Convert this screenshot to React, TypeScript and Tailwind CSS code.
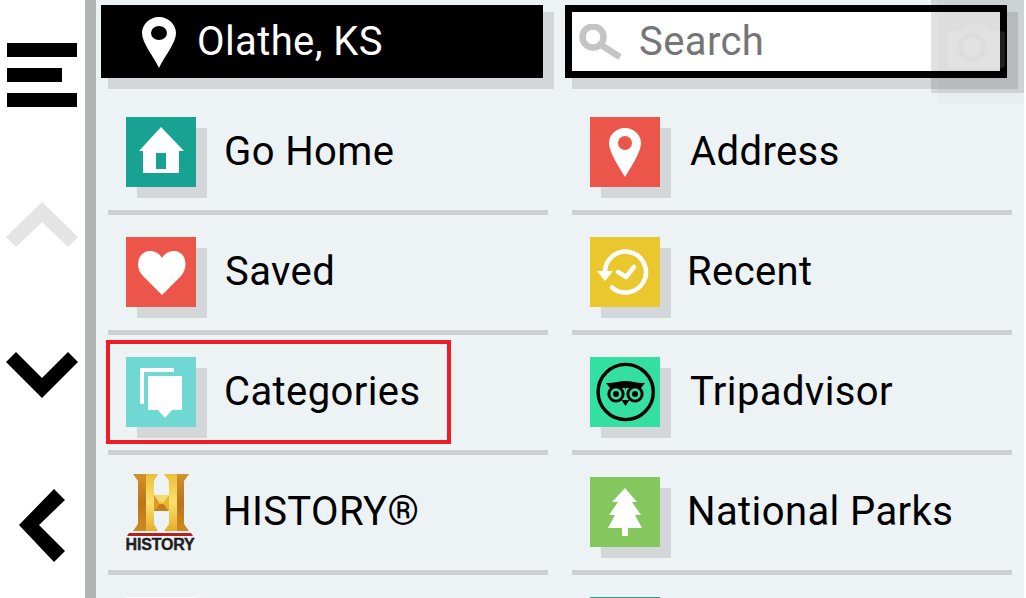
const shadowBox = "relative w-[70px] h-[70px] shrink-0 shadow-[11px_11px_0_0_#d3d7da]";

function Tile({ color, children }: { color: string; children: React.ReactNode }) {
  return (
    <div className={`${shadowBox} ${color}`}>
      <svg viewBox="0 0 70 70" className="w-[70px] h-[70px] block">{children}</svg>
    </div>
  );
}

const HomeIcon = () => (
  <Tile color="bg-[#18a291]">
    <path fillRule="evenodd" fill="#fff" d="M35 10 L58 34 L53 34 L53 56 L17 56 L17 34 L13 34 Z M30 36 V52 H40 V36 Z" />
  </Tile>
);
const PinIcon = () => (
  <Tile color="bg-[#ec5549]">
    <path fillRule="evenodd" fill="#fff" d="M35 11 C44 11 51 18 51 26 C51 35 41 50 35 60 C29 50 19 35 19 26 C19 18 26 11 35 11 Z M35 19 A7 7 0 1 0 35 33 A7 7 0 1 0 35 19 Z" />
  </Tile>
);
const HeartIcon = () => (
  <Tile color="bg-[#ec5549]">
    <path fill="#fff" d="M36 58 L17 39 C8 30 12 14 24 14 C29 14 33 16 36 21 C39 16 43 14 48 14 C60 14 63 30 55 39 Z" />
  </Tile>
);
const RecentIcon = () => (
  <Tile color="bg-[#eac72d]">
    <path fill="none" stroke="#fff" strokeWidth="4.5" strokeLinecap="round" d="M15 34 A20.5 20.5 0 1 1 22 50.5" />
    <path fill="#fff" d="M7 34 H23 L15 44 Z" />
    <path fill="none" stroke="#fff" strokeWidth="4.5" strokeLinecap="round" strokeLinejoin="round" d="M28 35 L36 40 L44 30" />
  </Tile>
);
const CategoriesIcon = () => (
  <Tile color="bg-[#6fd8d2]">
    <path fill="none" stroke="#fff" strokeWidth="4" d="M16 47 V13 H48" />
    <path fill="#fff" d="M22 19 H56 V53 H46 L39 61 L32 53 H22 Z" />
  </Tile>
);
const OwlIcon = () => (
  <Tile color="bg-[#34e0a1]">
    <circle cx="35.7" cy="35" r="27.6" fill="none" stroke="#000" strokeWidth="3.4" />
    <path fill="#000" d="M16 26 C24 26.5 29 24 35.5 24 C42 24 47 26.5 55 26 L51 31 H36 L35.5 33 L35 31 H20 Z" />
    <path fill="#000" d="M31.5 43 L35.5 49 L39.5 43 Z" />
    <circle cx="26" cy="37" r="8.6" fill="#000" />
    <circle cx="45" cy="37" r="8.6" fill="#000" />
    <circle cx="26" cy="37" r="5.7" fill="#34e0a1" />
    <circle cx="45" cy="37" r="5.7" fill="#34e0a1" />
    <circle cx="26" cy="37" r="3" fill="#000" />
    <circle cx="45" cy="37" r="3" fill="#000" />
  </Tile>
);
const TreeIcon = () => (
  <Tile color="bg-[#84c75c]">
    <path fill="#fff" d="M35 11 L47 25 H42 L51 38 H45 L52 51 H38 V59 H32 V51 H18 L25 38 H19 L28 25 H22 Z" />
  </Tile>
);
const HistoryIcon = () => (
  <div className="relative w-[70px] h-[70px] shrink-0">
    <svg viewBox="0 0 70 70" className="w-[70px] h-[70px] block overflow-visible">
      <defs>
        <linearGradient id="dark" x1="0" x2="0" y1="0" y2="1">
          <stop offset="0" stopColor="#d0922a" />
          <stop offset="0.5" stopColor="#bd731b" />
          <stop offset="1" stopColor="#cc8a20" />
        </linearGradient>
        <linearGradient id="light" x1="0" x2="0" y1="0" y2="1">
          <stop offset="0" stopColor="#edbe38" />
          <stop offset="0.5" stopColor="#f8e26b" />
          <stop offset="1" stopColor="#e6ad2c" />
        </linearGradient>
      </defs>
      <polygon fill="url(#dark)" points="7,-3 20,-3 20,54 7,54 12,47 12,4" />
      <polygon fill="url(#light)" points="20,-3 32,-3 28,4 28,47 32,54 20,54" />
      <polygon fill="url(#light)" points="38,-3 51,-3 51,54 38,54 43,47 43,4" />
      <polygon fill="url(#dark)" points="51,-3 63,-3 58,4 58,47 63,54 51,54" />
      <polygon fill="#f5d969" points="28,18 43,18 38,25 33,25" />
      <polygon fill="#e09b25" points="28,18 33,25 33,27 28,34" />
      <polygon fill="#c67f1d" points="28,34 33,27 38,27 43,34" />
      <polygon fill="#f0c03a" points="33,25 38,25 38,27 33,27" />
      <polygon fill="#e8b12f" points="43,18 38,25 38,27 43,34" />
      <polygon fill="#b21f24" points="3,56 65,56 67,59 1,59" />
    </svg>
    <span className="absolute left-[-2px] top-[60px] w-[72px] text-center font-['Liberation_Sans',sans-serif] font-bold text-[16px] leading-[16px] tracking-[-0.2px] text-[#1e1e24] [-webkit-text-stroke:0.4px_#1e1e24]">HISTORY</span>
  </div>
);

const labelClass = "text-[40px] leading-none text-black font-['Roboto',sans-serif] tracking-[0.4px]";

function Row({ icon, label, offset, boxed = false }: { icon: React.ReactNode; label: string; offset: string; boxed?: boolean }) {
  return (
    <div className="relative h-[120px] w-[440px] shrink-0">
      <div className="flex items-center h-[115px] pb-[1px] pl-[18px]">
        {icon}
        <span className={`${offset} ${labelClass}`}>{label}</span>
      </div>
      <div className="h-[5px] bg-[#cdd1d4]" />
      {boxed && <div className="absolute left-[-2px] top-[5px] w-[345px] h-[104px] border-4 border-[#ee1c25]" />}
    </div>
  );
}

export default function App() {
  return (
    <div className="w-[1026px] h-[598px] bg-white overflow-hidden flex">
      <aside className="w-[85px] shrink-0 flex flex-col items-center">
        <svg width="85" height="598" viewBox="0 0 85 598" className="block">
          <rect x="7" y="43" width="70" height="14" />
          <rect x="7" y="68" width="55" height="14" />
          <rect x="7" y="93" width="70" height="14" />
          <path fill="#e4e4e4" d="M42 202 L78 237 L68 247 L42 222 L16 247 L6 237 Z" />
          <path d="M42 398 L78 362 L68 352 L42 378 L16 352 L6 362 Z" />
          <path d="M19 525 L54 489 L65 500 L39 525 L65 551 L54 562 Z" />
        </svg>
      </aside>
      <div className="w-[11px] shrink-0 bg-[#afb3b6]" />
      <main className="relative w-[928px] shrink-0 bg-[#edf2f5] overflow-hidden">
        <div className="flex gap-[22px] pl-[5px] pt-[5px]">
          <div className="w-[442px] h-[73px] bg-black shadow-[9px_9px_0_2px_#d3d7da] flex items-center">
            <svg viewBox="0 0 34 51" className="w-[34px] h-[51px] ml-[41px] mt-[2px] shrink-0">
              <path fillRule="evenodd" fill="#fff" d="M17 0 C27 0 34 8 34 16 C34 26 22 40 17 51 C12 40 0 26 0 16 C0 8 7 0 17 0 Z M17 9 A8 7 0 1 0 17 23 A8 7 0 1 0 17 9 Z" />
            </svg>
            <span className={`ml-[21px] ${labelClass} !text-white`}>Olathe, KS</span>
          </div>
          <div className="w-[442px] h-[73px] bg-white border-[7px] border-black shadow-[9px_9px_0_2px_#d3d7da] flex items-center">
            <svg viewBox="0 0 44 36" className="w-[44px] h-[36px] ml-[7px] mt-[1px] shrink-0">
              <circle cx="14" cy="13" r="10.5" fill="none" stroke="#c4c4c4" strokeWidth="6.5" />
              <path d="M22 21 L41 33" stroke="#c4c4c4" strokeWidth="6.5" />
            </svg>
            <span className={`ml-[16px] ${labelClass} !text-[#757575]`}>Search</span>
          </div>
        </div>
        <div className="absolute left-[842px] top-0 w-[86px] h-[104px] bg-black/[0.02]" />
        <div className="absolute left-[835px] top-0 w-[93px] h-[93px] bg-black/[0.115]">
          <svg viewBox="0 0 57 43" className="absolute left-[17px] top-[25px] w-[57px] h-[43px]">
            <path fill="#fff" fillOpacity="0.12" d="M3 6 H16 L20 0 H38 L42 6 H53 Q57 6 57 10 V39 Q57 43 53 43 H3 Q0 43 0 39 V9 Q0 6 3 6 Z" />
            <circle cx="24" cy="22" r="12" fill="none" stroke="#000" strokeOpacity="0.02" strokeWidth="5" />
          </svg>
        </div>
        <div className="mt-[17px] pl-[12px] flex gap-[24px]">
          <div className="flex flex-col">
            <Row icon={<HomeIcon />} label="Go Home" offset="ml-[28px]" />
            <Row icon={<HeartIcon />} label="Saved" offset="ml-[29px]" />
            <Row icon={<CategoriesIcon />} label="Categories" offset="ml-[28px]" boxed />
            <Row icon={<HistoryIcon />} label="HISTORY®" offset="ml-[27px]" />
            <div className="pl-[18px] pt-[22px]"><div className="w-[70px] h-[70px] bg-white" /></div>
          </div>
          <div className="flex flex-col">
            <Row icon={<PinIcon />} label="Address" offset="ml-[30px]" />
            <Row icon={<RecentIcon />} label="Recent" offset="ml-[27px]" />
            <Row icon={<OwlIcon />} label="Tripadvisor" offset="ml-[30px]" />
            <Row icon={<TreeIcon />} label="National Parks" offset="ml-[27px]" />
            <div className="pl-[18px] pt-[22px]"><div className="w-[70px] h-[70px] bg-[#259a88]" /></div>
          </div>
        </div>
      </main>
    </div>
  );
}
